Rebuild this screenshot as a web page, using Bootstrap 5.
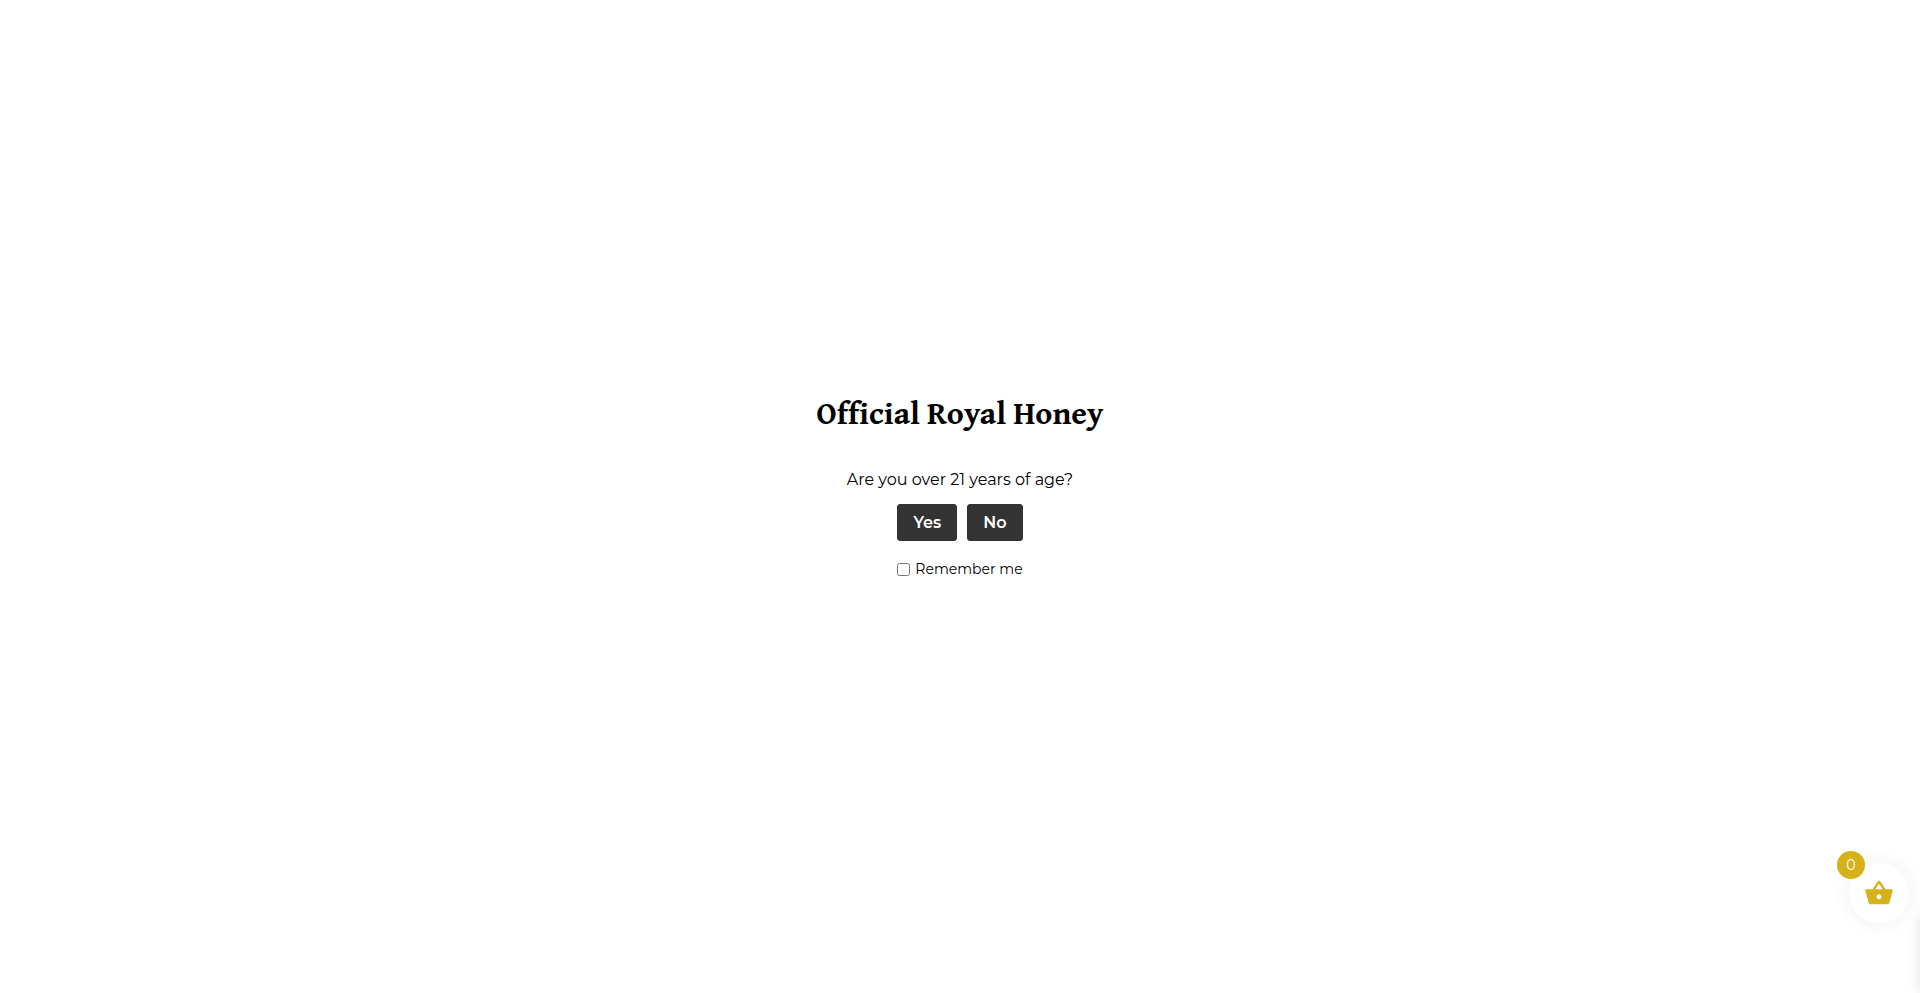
<!DOCTYPE html>
<html lang="en">
<head>
<meta charset="utf-8">
<meta name="viewport" content="width=device-width, initial-scale=1">
<title>Official Royal Honey</title>
<link href="https://cdn.jsdelivr.net/npm/bootstrap@5.3.0/dist/css/bootstrap.min.css" rel="stylesheet">
<style>
  body { font-family: Montserrat, Inter, sans-serif; color: #000; background: #fff; }
  .age-gate { padding-bottom: 19px; }
  .gate-title { font-family: "Gentium Book Plus", "Crimson Text", "Liberation Serif", serif; font-size: 32px; line-height: 40px; font-weight: 700; margin-bottom: 33px; }
  .gate-question { font-size: 16px; line-height: 28px; font-weight: 400; margin-bottom: 10px; }
  .gate-actions { gap: 10px; }
  .gate-btn { --bs-btn-color: #fff; --bs-btn-bg: #333; --bs-btn-border-color: #333; --bs-btn-hover-color: #fff; --bs-btn-hover-bg: #111;
    --bs-btn-font-size: 16px; --bs-btn-font-weight: 600; --bs-btn-border-radius: 3px;
    --bs-btn-padding-x: 15px; --bs-btn-padding-y: 8px; --bs-btn-line-height: 19px; }
  .gate-remember { font-size: 14px; line-height: 24px; font-weight: 400; margin-top: 16px; gap: 5px; }
  .gate-remember input { width: 13px; height: 13px; }
  .cart-toggle { right: 11px; bottom: 70px; width: 60px; height: 60px; box-shadow: 0 0 15px 5px rgba(0,0,0,.04); z-index: 3; }
  .cart-count { left: -12px; top: -12px; width: 28px; height: 28px; font-size: 14px; font-weight: 400; background: #d6b11a; color: #fff; }
  .cart-drawer { left: 100%; top: 915px; bottom: 0; width: 320px; box-shadow: 0 0 12px rgba(0,0,0,.12); z-index: 2; }
</style>
</head>
<body class="overflow-hidden">
<main class="age-gate min-vh-100 d-flex flex-column align-items-center justify-content-center text-center">
  <h1 class="gate-title">Official Royal Honey</h1>
  <p class="gate-question">Are you over 21 years of age?</p>
  <div class="gate-actions d-flex">
    <button type="button" class="btn gate-btn">Yes</button>
    <button type="button" class="btn gate-btn">No</button>
  </div>
  <div class="gate-remember d-flex align-items-center">
    <input type="checkbox" id="remember" class="m-0">
    <label for="remember">Remember me</label>
  </div>
</main>
<button type="button" class="cart-toggle position-fixed rounded-circle border-0 bg-white p-0 d-flex align-items-center justify-content-center" aria-label="Open cart">
  <svg width="30" height="30" viewBox="0 0 24 24" fill="#d6b11a" aria-hidden="true"><path d="M17.21 9l-4.38-6.56c-.19-.28-.51-.42-.83-.42s-.64.14-.83.43L6.790 9H2c-.55 0-1 .45-1 1 0 .09.01.18.04.27l2.540 9.270c.23.84 1 1.460 1.920 1.460h13c.92 0 1.690-.62 1.930-1.460l2.540-9.270L23 10c0-.55-.45-1-1-1h-4.790zM9 9l3-4.400L15 9H9zm3 8c-1.100 0-2-.9-2-2s.9-2 2-2 2 .9 2 2-.9 2-2 2z"/></svg>
  <span class="cart-count position-absolute rounded-circle d-flex align-items-center justify-content-center">0</span>
</button>
<aside class="cart-drawer position-fixed bg-white" aria-hidden="true"></aside>
<script src="https://cdn.jsdelivr.net/npm/bootstrap@5.3.0/dist/js/bootstrap.bundle.min.js"></script>
</body>
</html>
